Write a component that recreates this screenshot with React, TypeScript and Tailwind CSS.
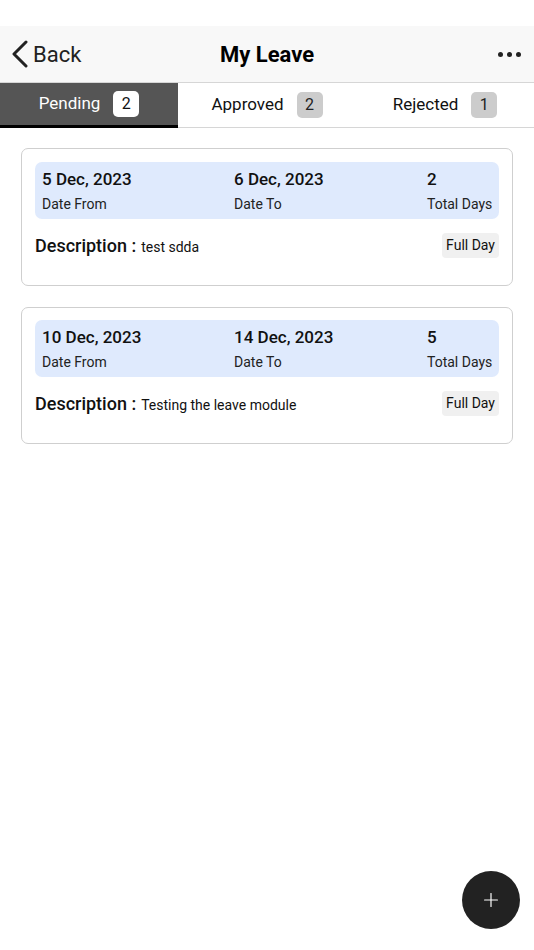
import { Plus } from "lucide-react";

type Leave = { from: string; to: string; days: number; description: string; type: string };

const leaves: Leave[] = [
    { from: "5 Dec, 2023", to: "6 Dec, 2023", days: 2, description: "test sdda", type: "Full Day" },
    { from: "10 Dec, 2023", to: "14 Dec, 2023", days: 5, description: "Testing the leave module", type: "Full Day" },
];

const tabs = [
    { label: "Pending", count: 2 },
    { label: "Approved", count: 2 },
    { label: "Rejected", count: 1 },
];

function LeaveCard({ leave }: { leave: Leave }) {
    return (
        <div className="rounded-[7px] border-[1.5px] border-[#cfcfcf] bg-white px-[13px] pt-[12.5px] pb-[27px]">
            <div className="grid h-[57px] grid-cols-[192px_193px_1fr] rounded-[7px] bg-[#dfeafd] px-[7px] pt-[7px]">
                <div>
                    <div className="text-[17px] font-medium leading-[20px] text-[#111]">{leave.from}</div>
                    <div className="mt-[7px] whitespace-nowrap text-[14px] leading-[17px] text-[#222]">Date From</div>
                </div>
                <div>
                    <div className="text-[17px] font-medium leading-[20px] text-[#111]">{leave.to}</div>
                    <div className="mt-[7px] whitespace-nowrap text-[14px] leading-[17px] text-[#222]">Date To</div>
                </div>
                <div>
                    <div className="text-[17px] font-medium leading-[20px] text-[#111]">{leave.days}</div>
                    <div className="mt-[7px] whitespace-nowrap text-[14px] leading-[17px] text-[#222]">Total Days</div>
                </div>
            </div>
            <div className="mt-[14px] flex h-[25px] items-center justify-between">
                <div className="flex items-baseline gap-[5px]">
                    <span className="text-[18px] font-medium text-[#111]">Description :</span>
                    <span className="text-[14px] text-[#111]">{leave.description}</span>
                </div>
                <span className="flex h-[25px] items-center rounded-[4px] bg-[#f0f0f0] px-[4px] text-[14px] text-[#111]">
                    {leave.type}
                </span>
            </div>
        </div>
    );
}

export default function App() {
    return (
        <div className="relative h-[950px] w-[534px] overflow-hidden bg-white font-['Roboto',sans-serif]">
            <div className="h-[26px] bg-white" />

            <div className="relative flex h-[57px] items-center border-b border-[#d6d6d6] bg-[#f8f8f8] pl-[11px]">
                <div className="flex items-center">
                    <svg width="18" height="28" viewBox="0 0 18 28" fill="none" className="-mt-[1px]">
                        <polyline points="15,2 3,14 15,26" stroke="#222" strokeWidth="3" strokeLinecap="round" strokeLinejoin="round" />
                    </svg>
                    <span className="ml-[4px] text-[22px] text-[#222]">Back</span>
                </div>
                <div className="absolute left-1/2 -translate-x-1/2 text-[22px] font-bold text-black">My Leave</div>
                <div className="ml-auto mr-[13px] flex gap-[4px]">
                    <span className="h-[5px] w-[5px] rounded-full bg-[#222]" />
                    <span className="h-[5px] w-[5px] rounded-full bg-[#222]" />
                    <span className="h-[5px] w-[5px] rounded-full bg-[#222]" />
                </div>
            </div>

            <div className="grid h-[45px] grid-cols-3 border-b border-[#d6d6d6]">
                {tabs.map((t, i) => (
                    <div
                        key={t.label}
                        className={
                            i === 0
                                ? "flex items-center justify-center gap-[13px] border-b-[3px] border-black bg-[#555555] -mb-px"
                                : "flex items-center justify-center gap-[13px]"
                        }
                    >
                        <span className={i === 0 ? "text-[17px] text-white" : "text-[17px] text-[#111]"}>{t.label}</span>
                        <span
                            className={
                                i === 0
                                    ? "flex h-[26px] w-[26px] items-center justify-center rounded-[5px] bg-white text-[16px] text-[#111]"
                                    : "flex h-[26px] w-[26px] items-center justify-center rounded-[5px] bg-[#cccccc] text-[16px] text-[#222]"
                            }
                        >
                            {t.count}
                        </span>
                    </div>
                ))}
            </div>

            <div className="flex flex-col gap-[21px] px-[21px] pt-[20px]">
                {leaves.map((l) => (
                    <LeaveCard key={l.from} leave={l} />
                ))}
            </div>

            <button className="absolute left-[462px] top-[871px] flex h-[58px] w-[58px] items-center justify-center rounded-full bg-[#222222]">
                <Plus className="h-[22px] w-[22px] text-white" strokeWidth={1.3} />
            </button>
        </div>
    );
}
